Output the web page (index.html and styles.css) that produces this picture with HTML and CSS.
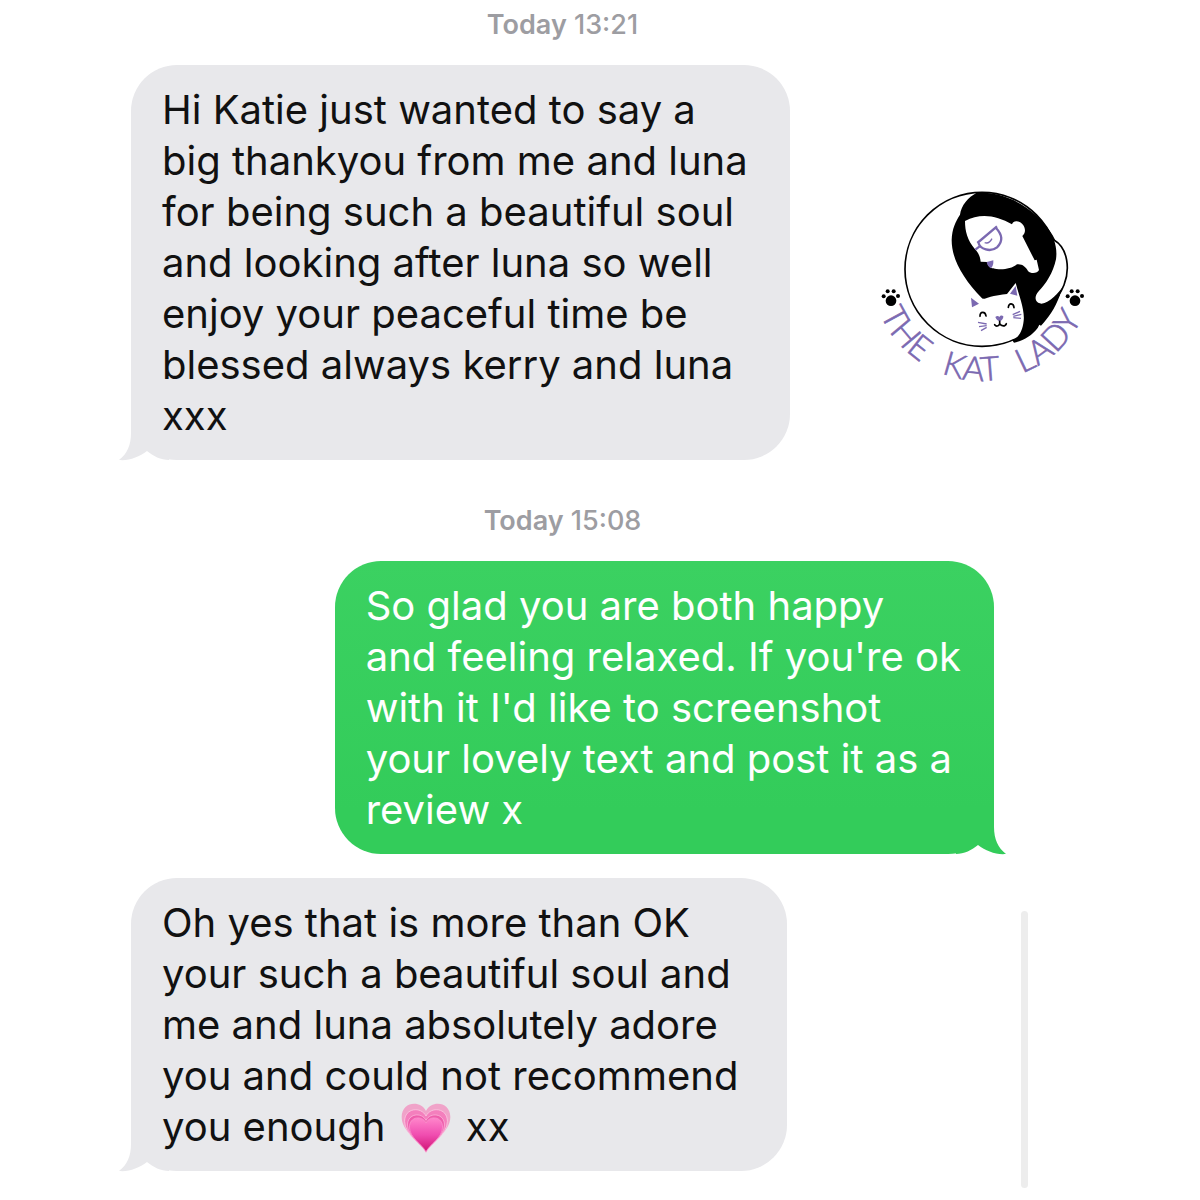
FILE: index.html
```html
<!DOCTYPE html>
<html lang="en">
<head>
<meta charset="utf-8">
<meta name="viewport" content="width=device-width, initial-scale=1">
<title>Messages – The Kat Lady</title>
<link rel="stylesheet" href="styles.css">
</head>
<body>
<main class="page">
  <section class="thread">
    <p class="stamp"><b>Today</b> 13:21</p>
    <div class="bubble received">
      <svg class="tail" viewBox="0 0 50 50" aria-hidden="true"><path d="M12 0V22C12 34 8 43 0 49C10 50 20 46 28 40C34 45 42 49 50 49V0Z"/></svg>
      <p class="message">Hi Katie just wanted to say a<br>big thankyou from me and luna<br>for being such a beautiful soul<br>and looking after luna so well<br>enjoy your peaceful time be<br>blessed always kerry and luna<br>xxx</p>
    </div>
    <p class="stamp later"><b>Today</b> 15:08</p>
    <div class="bubble sent">
      <svg class="tail" viewBox="0 0 50 50" aria-hidden="true"><path d="M12 0V22C12 34 8 43 0 49C10 50 20 46 28 40C34 45 42 49 50 49V0Z"/></svg>
      <p class="message">So glad you are both happy<br>and feeling relaxed. If you're ok<br>with it I'd like to screenshot<br>your lovely text and post it as a<br>review x</p>
    </div>
    <div class="bubble received reply">
      <svg class="tail" viewBox="0 0 50 50" aria-hidden="true"><path d="M12 0V22C12 34 8 43 0 49C10 50 20 46 28 40C34 45 42 49 50 49V0Z"/></svg>
      <p class="message">Oh yes that is more than OK<br>your such a beautiful soul and<br>me and luna absolutely adore<br>you and could not recommend<br>you enough <svg class="heart" viewBox="0 0 150 150" role="img" aria-label="growing heart">
        <defs>
          <linearGradient id="pink" x1="0" y1="0" x2="0" y2="1"><stop offset="0" stop-color="#ff86cb"/><stop offset=".5" stop-color="#f04db0"/><stop offset="1" stop-color="#cf1273"/></linearGradient>
          <path id="h" d="M75 148C60 116 2 88 2 42C2 -4 58 -10 75 24C92 -10 148 -4 148 42C148 88 90 116 75 148Z"/>
        </defs>
        <use href="#h" fill="#f0a3c9"/>
        <use href="#h" fill="#f47fbd" stroke="#fbc3df" stroke-width="3" transform="translate(9 18) scale(.88)"/>
        <use href="#h" fill="#ee5fac" stroke="#fbb5da" stroke-width="3" transform="translate(18 34) scale(.76)"/>
        <use href="#h" fill="url(#pink)" stroke="#f99bd0" stroke-width="3" transform="translate(24 43) scale(.68 .7)"/>
      </svg> xx</p>
    </div>
  </section>

  <svg class="logo" viewBox="0 0 690 630" role="img" aria-label="The Kat Lady">
    <defs>
      <path id="ring" d="M2 268A334 334 0 0 0 670 268"/>
      <g id="paw"><circle cx="0" cy="0" r="16"/><circle cx="-22" cy="-13" r="6"/><circle cx="-10" cy="-28" r="6"/><circle cx="8" cy="-28" r="6"/><circle cx="21" cy="-14" r="6"/></g>
    </defs>
    <circle cx="336" cy="268" r="231" fill="#fff" stroke="#000" stroke-width="5"/>
    <path d="M320 38C410 34 500 86 548 166C574 210 580 280 570 345C554 388 535 413 513 437L508 434L503 444C486 466 462 482 432 488L336 355C280 296 245 240 245 180C246 145 257 125 270 104C274 75 294 52 320 38Z"/>
    <path d="M530 350L580 318C572 338 560 358 550 380L525 410Z"/>
    <path d="M552 180C595 205 600 270 582 315C565 340 540 368 514 371C496 369 490 352 506 334C528 311 549 280 558 238C561 216 558 198 552 180Z" fill="#fff"/>
    <path d="M552 180C595 205 600 270 582 315C576 330 570 340 563 352" fill="none" stroke="#000" stroke-width="5"/>
    <path d="M285 123C331 98 379 106 426 133C430 119 451 122 461 137C468 151 465 161 457 168L494 241L500 239L507 270C503 280 483 283 474 273C467 260 456 251 441 253C422 270 386 270 370 265C360 265 352 255 352 246L332 245C330 225 322 216 315 208C292 180 285 154 285 123Z" fill="#fff"/>
    <path d="M300 355L344 356C367 347 397 344 411 342L437 309C447 346 465 390 461 422C458 454 444 478 422 479L325 470L296 410Z" fill="#fff"/>
    <path d="M303 353L327 371L306 382ZM437 318L442 347L420 341Z" fill="#7b69b1"/>
    <path d="M350 246L370 241C371 253 368 260 363 265Q352 259 350 246Z" fill="#7b69b1"/>
    <g fill="none" stroke="#7b69b1" stroke-width="7">
      <path d="M316 209L328 200M322 189L381 139M326 190C330 207 361 218 381 202C400 184 397 164 378 144"/>
      <path d="M344 188Q357 193 366 176" stroke-width="4"/>
      <path d="M324 427L350 432M327 440L350 437M333 452L350 442M428 404L450 394M430 409L454 403M430 413L453 415" stroke-width="4"/>
    </g>
    <path d="M376 411C381 406 386 408 388 411C390 405 397 405 400 409C401 416 394 422 389 425C381 421 378 416 376 411Z" fill="#7b69b1"/>
    <path d="M389 424V431C386 440 378 440 374 434M389 431C394 440 406 440 409 431M330 409C330 393 346 394 348 408M415 382C416 367 431 369 432 383" fill="none" stroke="#000" stroke-width="5" stroke-linecap="round"/>
    <use href="#paw" x="63" y="362"/>
    <use href="#paw" x="615" y="362"/>
    <g class="logo-name">
      <text><textPath href="#ring" startOffset="138">THE</textPath></text>
      <text><textPath href="#ring" startOffset="400">KAT</textPath></text>
      <text><textPath href="#ring" startOffset="648">LADY</textPath></text>
    </g>
  </svg>

  <div class="scroll-thumb"></div>
</main>
</body>
</html>
```
FILE: styles.css
```css
* {
  box-sizing: border-box;
}

body {
  margin: 0;
  background: #fff;
  font-family: Inter, "Liberation Sans", sans-serif;
}

p {
  margin: 0;
}

.page {
  display: grid;
  grid-template-columns: 131fr 863fr 206fr;
  padding-bottom: 30px;
}

.thread {
  grid-column: 2;
  grid-row: 1;
  display: flex;
  flex-direction: column;
  align-items: flex-start;
}

.stamp {
  align-self: center;
  padding: 9px 0 24px;
  color: #9d9da2;
  font-size: 27px;
  font-weight: 500;
  line-height: 32px;
}

.stamp b {
  font-weight: 600;
}

.later {
  padding-top: 45px;
}

.bubble {
  position: relative;
  min-width: 76%;
  padding: 19px 31px;
  border-radius: 46px;
  font-size: 40px;
  line-height: 51px;
  white-space: nowrap;
}

.message {
  position: relative;
}

.received {
  padding-right: 42px;
  background: #e8e8eb;
  color: #111;
  fill: #e8e8eb;
}

.sent {
  align-self: flex-end;
  padding-right: 33px;
  background: linear-gradient(#3bd161, #33cc5a 85%);
  color: #fff;
  fill: #33cc5a;
}

.reply {
  margin-top: 24px;
}

.tail {
  position: absolute;
  bottom: -1px;
  left: -12px;
  width: 50px;
  height: 50px;
}

.sent .tail {
  right: -12px;
  left: auto;
  transform: scaleX(-1);
}

.heart {
  width: 50px;
  height: 50px;
  margin: -8px 4px;
  vertical-align: -4px;
}

.logo {
  grid-column: 2 / 4;
  grid-row: 1;
  justify-self: end;
  width: 230px;
  height: 210px;
  margin: 180px 100px 0 0;
}

.logo-name {
  fill: #7b69b1;
  stroke: #7b69b1;
  stroke-width: 2px;
  font-family: Lato, "Liberation Sans", sans-serif;
  font-size: 100px;
  font-weight: 300;
}

.scroll-thumb {
  grid-column: 3;
  grid-row: 1;
  align-self: end;
  width: 7px;
  height: 277px;
  margin: 0 0 -17px 27px;
  border-radius: 4px;
  background: #ededed;
}
```
